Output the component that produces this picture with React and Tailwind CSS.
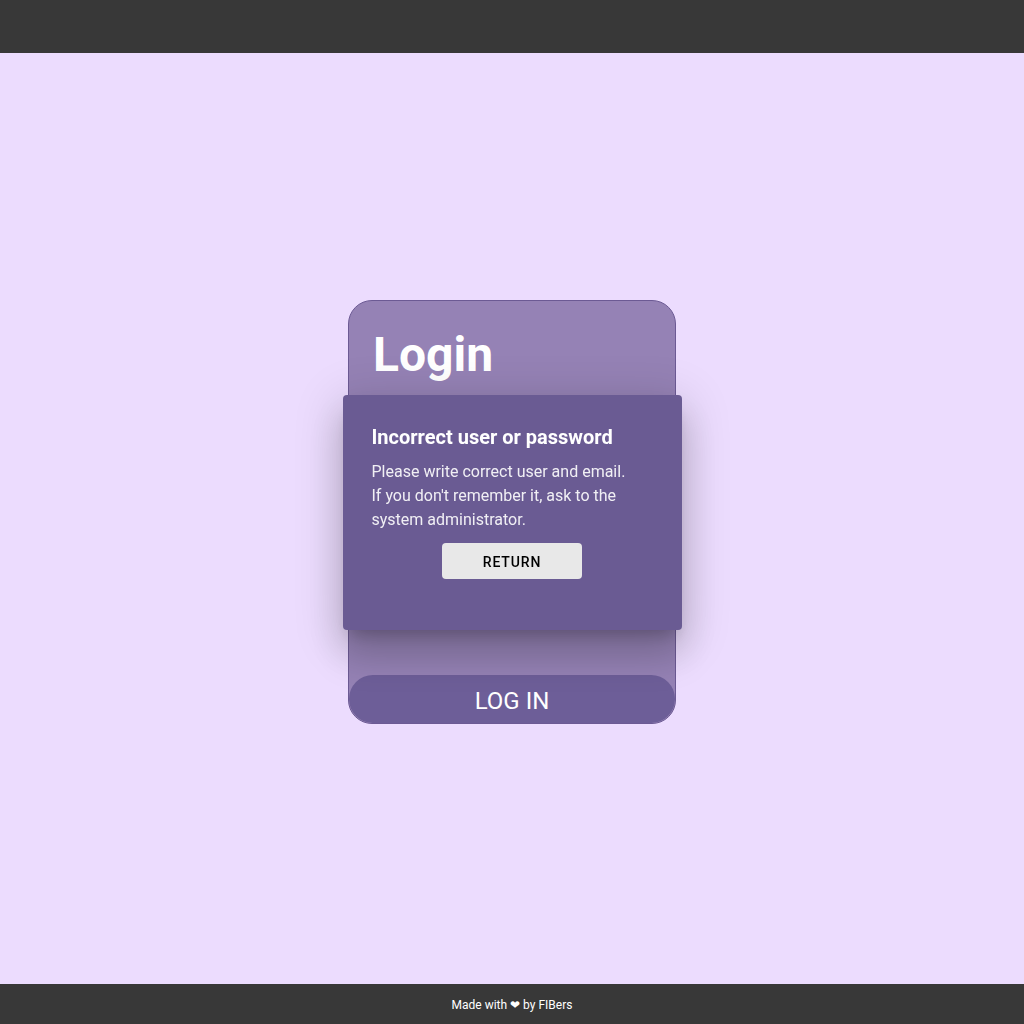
export default function App() {
    return (
        <div className="h-screen w-full flex flex-col bg-[#ecdcfe] font-['Roboto',_'Liberation_Sans',_sans-serif]">

            <header className="h-[53px] shrink-0 bg-[#383838]" />


            <main className="flex-1 flex items-center justify-center pb-[13px]">
                <div className="w-[328px] h-[424px] rounded-3xl border border-[#6c5a94] bg-[#9582b5] flex flex-col overflow-hidden">
                    <h1 className="px-6 pt-[22px] text-[48px] leading-[64px] font-bold text-white">
                        Login
                    </h1>

                    <div className="flex-1" />

                    <button className="h-12 w-full rounded-3xl bg-[#6d5e98] pt-1 text-white text-2xl">
                        LOG IN
                    </button>
                </div>
            </main>


            <footer className="h-10 shrink-0 bg-[#383838] flex items-center justify-center pt-px text-xs text-white">
                Made with ❤ by FIBers
            </footer>


            <div className="fixed inset-0 flex items-center justify-center">
                <div className="w-[339px] h-[235px] rounded-sm bg-[#6a5b93] pl-[29px] pr-[48px] pt-[28px] text-white shadow-[0_11px_15px_-7px_rgba(0,0,0,0.2),0_24px_38px_3px_rgba(0,0,0,0.14),0_9px_46px_8px_rgba(0,0,0,0.12)]">
                    <h2 className="text-xl font-bold leading-7">Incorrect user or password</h2>
                    <p className="mt-[9px] text-base leading-6 text-white/90">
                        Please write correct user and email. If you don't remember it, ask to the
                        system administrator.
                    </p>
                    <div className="mt-[11px] -mr-[19px] flex justify-center">
                        <button className="w-[140px] h-9 rounded-sm bg-[#e8e8e8] pt-[3px] text-sm font-medium tracking-[0.06em] text-black">
                            RETURN
                        </button>
                    </div>
                </div>
            </div>
        </div>
    );
}
